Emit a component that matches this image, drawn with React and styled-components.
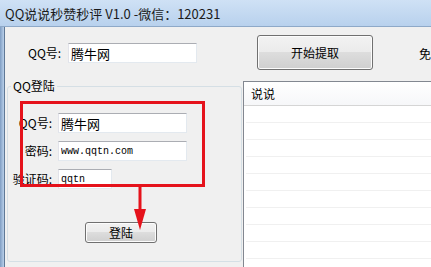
import styled, { createGlobalStyle } from "styled-components";

const GlobalStyle = createGlobalStyle`
  html, body {
    margin: 0;
    padding: 0;
    background: #f0f0f0;
    overflow: hidden;
  }
  body {
    font-family: "Noto Sans CJK SC", "DejaVu Sans", sans-serif;
    font-size: 12px;
    color: #000;
  }
`;

const Window = styled.div`
  position: relative;
  width: 431px;
  height: 267px;
  display: flex;
  flex-direction: column;
  overflow: hidden;
  background: #f0f0f0;
`;

const TitleBar = styled.div`
  flex: none;
  height: 26px;
  display: flex;
  align-items: center;
  padding-left: 5px;
  background: linear-gradient(#cfe1f5, #b8d1ed);
  border-bottom: 1px solid #8ea9c8;
  font-size: 13px;
  color: #1a1a1a;
  white-space: nowrap;
`;

const Frame = styled.div`
  flex: 1;
  display: flex;
  min-height: 0;
`;

const FrameEdge = styled.div`
  flex: none;
  width: 4px;
  background: linear-gradient(90deg, #7f9dc3, #b9d0ea);
  border-right: 1px solid #5f7896;
`;

const Client = styled.div`
  flex: 1;
  display: flex;
  flex-direction: column;
  min-width: 0;
`;

const TopPanel = styled.div`
  flex: none;
  height: 52px;
  display: flex;
  align-items: flex-start;
  white-space: nowrap;
`;

const Field = styled.div`
  display: flex;
  align-items: center;
  margin-left: ${p => p.$left || 0}px;
  margin-top: ${p => p.$top || 0}px;
`;

const Label = styled.span`
  width: ${p => p.$w}px;
  flex: none;
  font-size: 12px;
  line-height: 20px;
  text-align: ${p => p.$align || "left"};
`;

const TextBox = styled.input`
  box-sizing: border-box;
  width: ${p => p.$w}px;
  height: 20px;
  margin: 0;
  padding: 0 2px;
  background: #fff;
  border: 1px solid #e3e9ef;
  border-top-color: #abadb3;
  border-left-color: #e2e3ea;
  outline: none;
  color: #000;
  font-family: ${p => p.$mono
    ? '"Liberation Mono", "DejaVu Sans Mono", monospace'
    : '"Noto Sans CJK SC", sans-serif'};
  font-size: ${p => p.$mono ? 10 : 13}px;
`;

const WinButton = styled.button`
  box-sizing: border-box;
  width: ${p => p.$w}px;
  height: ${p => p.$h}px;
  margin: ${p => p.$top || 0}px 0 0 ${p => p.$left || 0}px;
  padding: 0;
  border: 1px solid #707070;
  border-radius: 3px;
  background: linear-gradient(#f2f2f2 0%, #ebebeb 50%, #dddddd 50%, #cfcfcf 100%);
  box-shadow: inset 0 0 0 1px #fcfcfc;
  font-family: "Noto Sans CJK SC", sans-serif;
  font-size: 12px;
  color: #000;
  flex: none;
`;

const SideNote = styled.span`
  margin: 19px 0 0 46px;
  font-size: 12px;
  line-height: 16px;
`;

const Lower = styled.div`
  flex: 1;
  display: flex;
  min-height: 0;
`;

const GroupBox = styled.fieldset`
  flex: none;
  box-sizing: border-box;
  width: 235px;
  height: 183px;
  margin: 0 0 0 2px;
  padding: 0;
  border: 1px solid #d5dfe5;
  border-radius: 3px;
  display: flex;
  flex-direction: column;
  align-items: flex-start;
`;

const Caption = styled.legend`
  margin-left: 3px;
  padding: 0 2px;
  font-size: 12px;
  line-height: 14px;
`;

const FormGrid = styled.div`
  display: grid;
  grid-template-columns: 44px auto;
  column-gap: 6px;
  row-gap: 8px;
  align-items: center;
  margin-top: 20px;
`;

const FormLabel = styled.span`
  text-align: right;
  font-size: 12px;
  line-height: 20px;
  white-space: nowrap;
`;

const ListView = styled.div`
  flex: none;
  width: 220px;
  margin: 2px 0 0 1px;
  border: 1px solid #828790;
  border-bottom: none;
  background: #fff;
  overflow: hidden;
`;

const ListHeader = styled.div`
  height: 23px;
  display: flex;
  align-items: center;
  padding-left: 7px;
  background: linear-gradient(#ffffff, #f6f7f9);
  border-bottom: 1px solid #d5d5d5;
  font-size: 12px;
`;

const ListRow = styled.div`
  height: 16px;
  margin: 0 2px;
  border-bottom: 1px solid #f0f0f0;
`;

const RedBox = styled.div`
  position: absolute;
  left: 20px;
  top: 101px;
  width: 185px;
  height: 86px;
  box-sizing: border-box;
  border: 3px solid #e5121b;
  pointer-events: none;
`;

const Arrow = styled.svg`
  position: absolute;
  left: 133px;
  top: 187px;
  pointer-events: none;
`;

export default function App() {
  return (
    <>
      <GlobalStyle />
      <Window>
        <TitleBar>QQ说说秒赞秒评 V1.0 -微信：120231</TitleBar>
        <Frame>
          <FrameEdge />
          <Client>
            <TopPanel>
              <Field $left={23} $top={16}>
                <Label $w={40}>QQ号:</Label>
                <TextBox $w={129} defaultValue="腾牛网" readOnly />
              </Field>
              <WinButton $w={116} $h={35} $left={60} $top={8}>开始提取</WinButton>
              <SideNote>免</SideNote>
            </TopPanel>
            <Lower>
              <GroupBox>
                <Caption>QQ登陆</Caption>
                <FormGrid>
                  <FormLabel>QQ号:</FormLabel>
                  <TextBox $w={129} defaultValue="腾牛网" readOnly />
                  <FormLabel>密码:</FormLabel>
                  <TextBox $w={129} $mono defaultValue="www.qqtn.com" readOnly />
                  <FormLabel>验证码:</FormLabel>
                  <TextBox $w={54} $mono defaultValue="qqtn" readOnly />
                </FormGrid>
                <WinButton $w={72} $h={21} $left={77} $top={33}>登陆</WinButton>
              </GroupBox>
              <ListView>
                <ListHeader>说说</ListHeader>
                {Array.from({ length: 10 }, (_, i) => <ListRow key={i} />)}
              </ListView>
            </Lower>
          </Client>
        </Frame>
        <RedBox />
        <Arrow width="14" height="44" viewBox="0 0 14 44">
          <rect x="5.5" y="0" width="3" height="26" fill="#e5121b" />
          <polygon points="1,22 13,22 7,43" fill="#e5121b" />
        </Arrow>
      </Window>
    </>
  );
}
